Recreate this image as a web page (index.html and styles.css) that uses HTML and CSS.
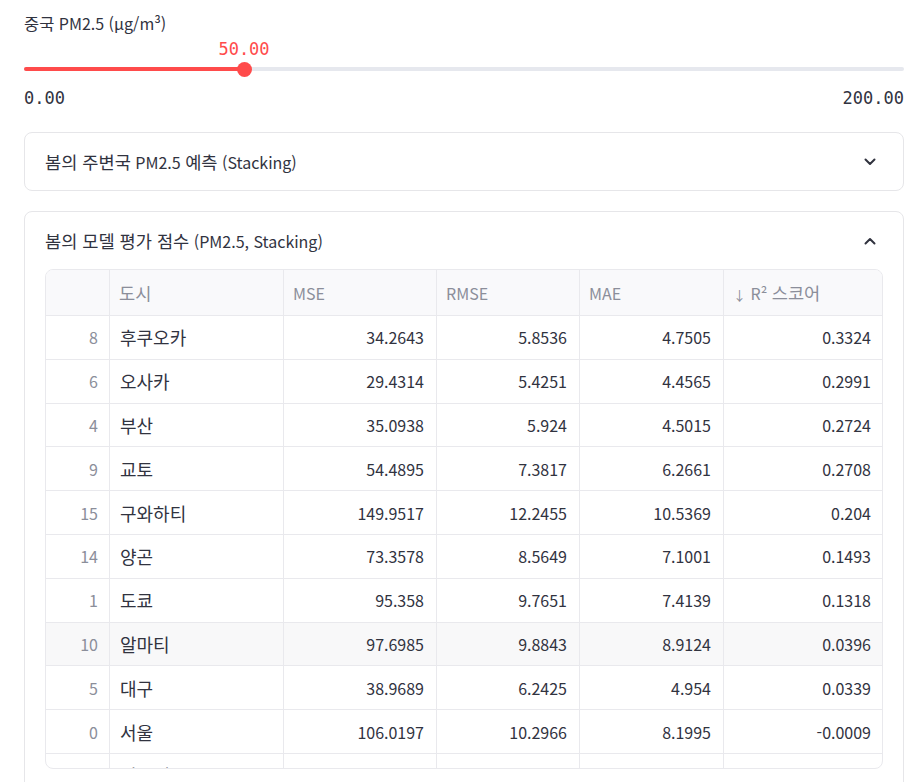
FILE: index.html
```html
<!DOCTYPE html>
<html lang="ko">
<head>
<meta charset="utf-8">
<link rel="stylesheet" href="styles.css">
</head>
<body>
<div class="page">
  <div class="slider">
    <div class="slider-label"><span class="ko">중국</span> PM2.5 (μg/m³)</div>
    <div class="slider-body">
      <div class="track">
        <div class="fill" style="width:25%"></div>
        <div class="thumb" style="left:25%"><span class="thumb-value">50.00</span></div>
      </div>
    </div>
    <div class="ticks"><span>0.00</span><span>200.00</span></div>
  </div>

  <div class="expander">
    <div class="exp-header">
      <span><span class="ko">봄의 주변국</span> PM2.5 <span class="ko">예측</span> (Stacking)</span>
      <svg class="chev" width="14" height="14" viewBox="0 0 14 14"><polyline points="2.5,4.5 7,9 11.5,4.5" fill="none" stroke="#31333f" stroke-width="2" stroke-linecap="round" stroke-linejoin="round"/></svg>
    </div>
  </div>

  <div class="expander open">
    <div class="exp-header">
      <span><span class="ko">봄의 모델 평가 점수</span> (PM2.5, Stacking)</span>
      <svg class="chev" width="14" height="14" viewBox="0 0 14 14"><polyline points="2.5,9.5 7,5 11.5,9.5" fill="none" stroke="#31333f" stroke-width="2" stroke-linecap="round" stroke-linejoin="round"/></svg>
    </div>
    <div class="exp-body">
      <div class="grid">
        <table>
          <colgroup>
            <col class="c-idx"><col class="c-city"><col class="c-mse"><col class="c-rmse"><col class="c-mae"><col class="c-r2">
          </colgroup>
          <thead>
            <tr><th></th><th><span class="ko">도시</span></th><th>MSE</th><th>RMSE</th><th>MAE</th><th><span class="arrow">↓</span> R² <span class="ko">스코어</span></th></tr>
          </thead>
          <tbody>
            <tr><td class="idx">8</td><td class="city">후쿠오카</td><td>34.2643</td><td>5.8536</td><td>4.7505</td><td>0.3324</td></tr>
            <tr><td class="idx">6</td><td class="city">오사카</td><td>29.4314</td><td>5.4251</td><td>4.4565</td><td>0.2991</td></tr>
            <tr><td class="idx">4</td><td class="city">부산</td><td>35.0938</td><td>5.924</td><td>4.5015</td><td>0.2724</td></tr>
            <tr><td class="idx">9</td><td class="city">교토</td><td>54.4895</td><td>7.3817</td><td>6.2661</td><td>0.2708</td></tr>
            <tr><td class="idx">15</td><td class="city">구와하티</td><td>149.9517</td><td>12.2455</td><td>10.5369</td><td>0.204</td></tr>
            <tr><td class="idx">14</td><td class="city">양곤</td><td>73.3578</td><td>8.5649</td><td>7.1001</td><td>0.1493</td></tr>
            <tr><td class="idx">1</td><td class="city">도쿄</td><td>95.358</td><td>9.7651</td><td>7.4139</td><td>0.1318</td></tr>
            <tr class="hover"><td class="idx">10</td><td class="city">알마티</td><td>97.6985</td><td>9.8843</td><td>8.9124</td><td>0.0396</td></tr>
            <tr><td class="idx">5</td><td class="city">대구</td><td>38.9689</td><td>6.2425</td><td>4.954</td><td>0.0339</td></tr>
            <tr><td class="idx">0</td><td class="city">서울</td><td>106.0197</td><td>10.2966</td><td>8.1995</td><td>-0.0009</td></tr>
            <tr><td class="idx">11</td><td class="city">비슈케크</td><td>112.4310</td><td>10.6034</td><td>8.6702</td><td>-0.0231</td></tr>
          </tbody>
        </table>
      </div>
    </div>
  </div>
</div>
</body>
</html>
```

FILE: styles.css
```css
* { box-sizing: border-box; }
html, body { margin: 0; padding: 0; background: #ffffff; overflow: hidden; }
body {
  font-family: "Noto Sans CJK KR", "Noto Sans", sans-serif;
  color: #31333f;
}
.page {
  width: 915px;
  padding: 8px 11px 0 24px;
  display: flex;
  flex-direction: column;
}
.ko { font-size: 1.1em; }
.slider-label {
  font-size: 16px;
  line-height: 30px;
  height: 30px;
}
.slider-label .ko { font-size: 1.03em; }
.slider-body {
  height: 50px;
  padding-top: 29px;
}
.track {
  position: relative;
  height: 4px;
  border-radius: 2px;
  background: #e6e8ee;
}
.fill {
  height: 4px;
  border-radius: 2px;
  background: #ff4b4b;
}
.thumb {
  position: absolute;
  top: -5.5px;
  width: 15px;
  height: 15px;
  margin-left: -7.5px;
  border-radius: 50%;
  background: #ff4b4b;
}
.thumb-value {
  position: absolute;
  bottom: 18px;
  left: 50%;
  transform: translateX(-50%);
  font-family: "DejaVu Sans Mono", "Liberation Mono", monospace;
  font-size: 17px;
  line-height: 20px;
  color: #ff4b4b;
  white-space: nowrap;
}
.ticks {
  display: flex;
  justify-content: space-between;
  font-family: "DejaVu Sans Mono", "Liberation Mono", monospace;
  font-size: 17px;
  line-height: 20px;
  height: 24px;
}
.expander {
  border: 1px solid #e6e6e9;
  border-radius: 8px;
  margin-top: 20px;
  width: 880px;
}
.expander.open {
  height: 600px;
}
.exp-header {
  height: 57px;
  display: flex;
  align-items: center;
  justify-content: space-between;
  padding: 0 26px 0 20px;
  font-size: 16px;
}
.chev { display: block; }
.exp-body {
  padding: 0 20px;
}
.grid {
  border: 1px solid #e9e9ed;
  border-radius: 8px;
  overflow: hidden;
  height: 500px;
}
table {
  border-collapse: collapse;
  table-layout: fixed;
  width: 837px;
  margin: -1px 0 0 -1px;
}
.c-idx { width: 64px; }
.c-city { width: 174px; }
.c-mse { width: 153px; }
.c-rmse { width: 143px; }
.c-mae { width: 144px; }
.c-r2 { width: 160px; }
th, td {
  border: 1px solid #e9e9ed;
  white-space: nowrap;
  overflow: hidden;
}
th {
  height: 46px;
  padding: 0 9px;
  background: #f9f9fb;
  color: #8b8e9a;
  font-weight: normal;
  font-size: 16px;
  text-align: left;
}
td {
  height: 43.8px;
  padding: 0 12px;
  font-size: 16px;
  text-align: right;
  color: #31333f;
}
td.idx { color: #8b8e9a; padding-right: 11px; }
td.city { text-align: left; font-size: 18px; padding-left: 10px; }
tr.hover td { background: #f8f8f9; }
.arrow { font-size: 13px; }
```
